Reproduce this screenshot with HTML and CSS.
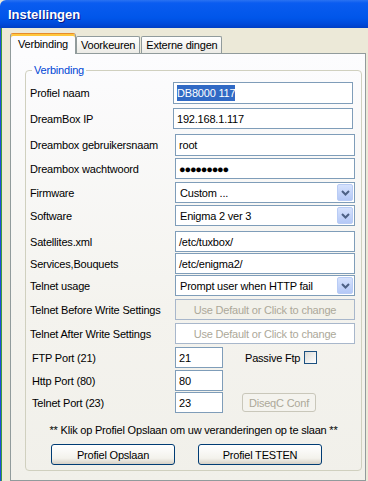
FILE: index.html
```html
<!DOCTYPE html>
<html lang="nl">
<head>
    <meta charset="UTF-8">
    <meta name="viewport" content="width=device-width, initial-scale=1.0">
    <title>Instellingen</title>
    <link rel="stylesheet" href="styles.css">
</head>
<body>
    <div class="window">
        <div class="titlebar">Instellingen</div>

        <div class="client">
            <div class="tabs">
                <div class="tab active">Verbinding</div>
                <div class="tab">Voorkeuren</div>
                <div class="tab gap">Externe dingen</div>
            </div>

            <div class="panel">
                <fieldset class="group">
                    <legend>Verbinding</legend>

                    <div class="form">
                        <div class="row">
                            <span class="label">Profiel naam</span>
                            <div class="field shift tall"><span class="selected">DB8000 117</span></div>
                        </div>
                        <div class="row">
                            <span class="label">DreamBox IP</span>
                            <div class="field shift">192.168.1.117</div>
                        </div>
                        <div class="row">
                            <span class="label">Dreambox gebruikersnaam</span>
                            <div class="field tall">root</div>
                        </div>
                        <div class="row">
                            <span class="label">Dreambox wachtwoord</span>
                            <div class="field dots">●●●●●●●●●</div>
                        </div>
                        <div class="row">
                            <span class="label">Firmware</span>
                            <div class="field select">
                                <span class="value">Custom ...</span>
                                <span class="arrow"><svg width="9" height="6" viewBox="0 0 9 6"><path d="M1 1l3.5 3.5L8 1" fill="none" stroke="#4d6185" stroke-width="2"/></svg></span>
                            </div>
                        </div>
                        <div class="row">
                            <span class="label">Software</span>
                            <div class="field select">
                                <span class="value">Enigma 2 ver 3</span>
                                <span class="arrow"><svg width="9" height="6" viewBox="0 0 9 6"><path d="M1 1l3.5 3.5L8 1" fill="none" stroke="#4d6185" stroke-width="2"/></svg></span>
                            </div>
                        </div>
                        <div class="row">
                            <span class="label">Satellites.xml</span>
                            <div class="field">/etc/tuxbox/</div>
                        </div>
                        <div class="row">
                            <span class="label">Services,Bouquets</span>
                            <div class="field">/etc/enigma2/</div>
                        </div>
                        <div class="row">
                            <span class="label">Telnet usage</span>
                            <div class="field select">
                                <span class="value">Prompt user when HTTP fail</span>
                                <span class="arrow"><svg width="9" height="6" viewBox="0 0 9 6"><path d="M1 1l3.5 3.5L8 1" fill="none" stroke="#4d6185" stroke-width="2"/></svg></span>
                            </div>
                        </div>
                        <div class="row">
                            <span class="label">Telnet Before Write Settings</span>
                            <div class="field muted grey">Use Default or Click to change</div>
                        </div>
                        <div class="row">
                            <span class="label">Telnet After Write Settings</span>
                            <div class="field muted">Use Default or Click to change</div>
                        </div>
                        <div class="row">
                            <span class="label port">FTP Port (21)</span>
                            <div class="field short">21</div>
                            <span class="check-label">Passive Ftp</span>
                            <span class="checkbox"></span>
                        </div>
                        <div class="row">
                            <span class="label port">Http Port (80)</span>
                            <div class="field short">80</div>
                        </div>
                        <div class="row">
                            <span class="label port">Telnet Port (23)</span>
                            <div class="field short">23</div>
                            <button class="button disabled" type="button">DiseqC Conf</button>
                        </div>
                    </div>

                    <p class="note">** Klik op Profiel Opslaan om uw veranderingen op te slaan **</p>

                    <div class="actions">
                        <button class="button primary" type="button">Profiel Opslaan</button>
                        <button class="button primary" type="button">Profiel TESTEN</button>
                    </div>
                </fieldset>
            </div>
        </div>
    </div>
</body>
</html>
```

FILE: styles.css
```css
* {
    margin: 0;
    padding: 0;
    box-sizing: border-box;
}

body {
    width: 368px;
    height: 481px;
    overflow: hidden;
    background: #ECE9D8;
    font-family: 'Liberation Sans', Arial, sans-serif;
    font-size: 11px;
    letter-spacing: -0.2px;
    color: #000;
}

.window {
    display: flex;
    flex-direction: column;
    height: 481px;
}

.titlebar {
    height: 28px;
    padding: 1px 0 0 8px;
    line-height: 28px;
    font-size: 13px;
    font-weight: bold;
    letter-spacing: 0;
    color: #fff;
    text-shadow: 1px 1px #0a1883;
    background: linear-gradient(#2a72f2 0, #0a5cf0 3px, #0056ea 18px, #0049da 24px, #003ec4 28px);
    border-top-left-radius: 6px;
}

.client {
    flex: 1;
    display: flex;
    flex-direction: column;
    padding-left: 10px;
    background: linear-gradient(to right, #1b4fdc 0 1px, #3c9d3c 1px 2px, transparent 2px);
}

/* tabs */
.tabs {
    position: relative;
    z-index: 1;
    display: flex;
    align-items: flex-end;
    height: 20px;
    margin-top: 5px;
}

.tab {
    display: flex;
    align-items: center;
    height: 17px;
    padding: 0 4px;
    border: 1px solid #919B9C;
    border-bottom: none;
    border-radius: 2px 2px 0 0;
    background: linear-gradient(#fff, #ECEBE6);
}

.tab.active {
    height: 21px;
    margin-bottom: -1px;
    padding: 0 7px 1px;
    border-top: 1px solid #E68B2C;
    border-radius: 3px 3px 0 0;
    background: #FCFCFE;
    box-shadow: inset 0 2px #FFC73C;
}

.tab.gap {
    margin-left: 1px;
}

.panel {
    flex: 1;
    width: 356px;
    padding: 10px 3px 0 14px;
    border: 1px solid #919B9C;
    background: linear-gradient(#FCFCFE, #F4F3EE 60%, #F1F0EA);
}

/* group box */
.group {
    border: 1px solid #D0D0BF;
    border-radius: 4px;
    padding: 0 0 5px;
}

.group legend {
    margin-left: 6px;
    padding: 0 2px;
    line-height: 13px;
    color: #0046D5;
}

.form {
    display: grid;
    grid-template-rows: 26px 26px 24px 24px 23px 26px 22px 22px 24px 24px 24px 23px 22px 21px;
    padding: 5px 0 0 4px;
}

.row {
    display: flex;
    align-items: center;
    height: 21px;
}

.label {
    width: 145px;
    flex-shrink: 0;
}

.label.port {
    padding-left: 2px;
}

.field {
    display: flex;
    align-items: center;
    width: 180px;
    height: 21px;
    padding: 0 3px;
    border: 1px solid #7F9DB9;
    background: #fff;
    white-space: nowrap;
}

.field.shift {
    margin-left: -2px;
}

.field.tall {
    height: 22px;
}

.field.short {
    width: 48px;
}

.field.dots {
    padding-left: 3px;
    font-size: 11px;
    letter-spacing: -1.2px;
}

.selected {
    background: #316AC5;
    color: #fff;
    line-height: 16px;
}

.field.select {
    padding: 0 1px 0 4px;
}

.field.select .value {
    flex: 1;
}

.arrow {
    display: flex;
    align-items: center;
    justify-content: center;
    width: 16px;
    height: 17px;
    border: 1px solid #B9CCF5;
    border-radius: 2px;
    background: linear-gradient(#D6E2FD, #B4C8F6);
}

.field.muted {
    justify-content: center;
    color: #ACA899;
    border-color: #A8B7CB;
}

.field.muted.grey {
    background: #F2F1EA;
}

.check-label {
    margin-left: 22px;
}

.checkbox {
    width: 13px;
    height: 13px;
    margin-left: 4px;
    border: 1px solid #1C5180;
    background: linear-gradient(135deg, #DCDCD7, #fff);
}

/* buttons */
.button {
    height: 21px;
    border: 1px solid #003C74;
    border-radius: 3px;
    background: linear-gradient(#fff, #F3F2EC 70%, #D6D0C5);
    font-family: 'Liberation Sans', Arial, sans-serif;
    font-size: 11px;
    letter-spacing: -0.2px;
    color: #000;
}

.button.primary {
    width: 124px;
}

.button.disabled {
    width: 74px;
    height: 19px;
    margin-left: 19px;
    border-color: #C9C7BA;
    background: #F4F3EE;
    color: #ACA899;
}

.note {
    margin-top: 10px;
    line-height: 14px;
    text-align: center;
}

.actions {
    display: flex;
    gap: 23px;
    margin-top: 7px;
    padding-left: 25px;
}
```
